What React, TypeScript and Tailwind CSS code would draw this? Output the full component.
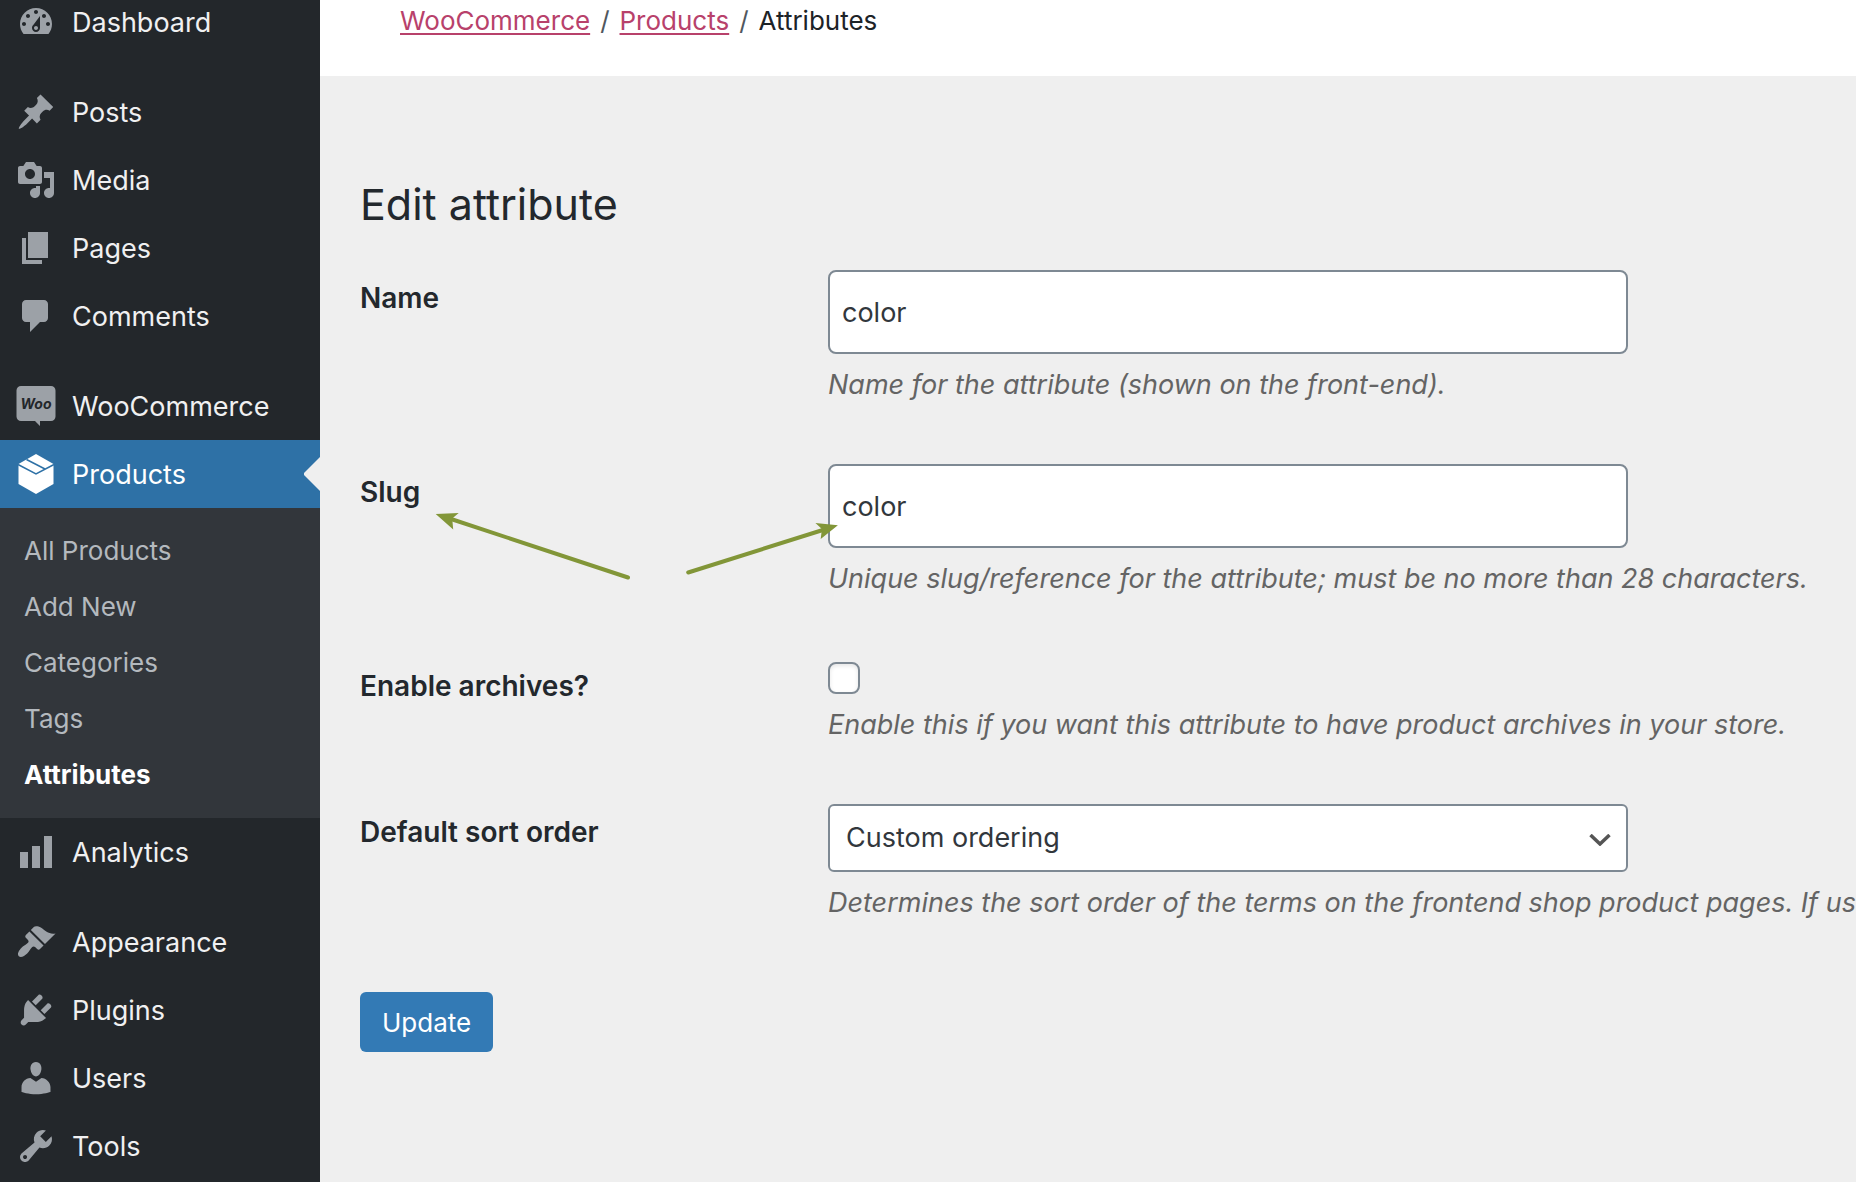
import { useId, type ReactNode } from "react";

const icons = {
  dashboard:
    "M3.76 16h12.48c1.1-1.37 1.76-3.11 1.76-5 0-4.42-3.58-8-8-8s-8 3.58-8 8c0 1.89.66 3.63 1.76 5zM10 4c.55 0 1 .45 1 1s-.45 1-1 1-1-.45-1-1 .45-1 1-1zM6 6c.55 0 1 .45 1 1s-.45 1-1 1-1-.45-1-1 .45-1 1-1zm8 0c.55 0 1 .45 1 1s-.45 1-1 1-1-.45-1-1 .45-1 1-1zm-5.37 5.55L12 7v6c0 1.1-.9 2-2 2s-2-.9-2-2c0-.57.24-1.08.63-1.45zM4 10c.55 0 1 .45 1 1s-.45 1-1 1-1-.45-1-1 .45-1 1-1zm12 0c.55 0 1 .45 1 1s-.45 1-1 1-1-.45-1-1 .45-1 1-1zm-5 3c0-.55-.45-1-1-1s-1 .45-1 1 .45 1 1 1 1-.45 1-1z",
  posts:
    "M10.44 3.02l1.82-1.82 6.36 6.35-1.83 1.82c-1.05-.68-2.48-.57-3.41.36l-.75.75c-.92.93-1.04 2.35-.35 3.41l-1.83 1.82-2.41-2.41-2.8 2.79c-.42.42-3.38 2.71-3.8 2.29s1.86-3.39 2.28-3.81l2.79-2.79L4.1 9.36l1.83-1.82c1.05.69 2.48.57 3.4-.36l.75-.75c.93-.92 1.05-2.35.36-3.41z",
  media:
    "M13 11V4c0-.55-.45-1-1-1h-1.67L9 1H5L3.67 3H2c-.55 0-1 .45-1 1v7c0 .55.45 1 1 1h10c.55 0 1-.45 1-1zM7 4.5c1.38 0 2.5 1.12 2.5 2.5S8.38 9.5 7 9.5 4.5 8.38 4.5 7 5.62 4.5 7 4.5zM14 6h5v10.5c0 1.38-1.12 2.5-2.5 2.5S14 17.88 14 16.5s1.12-2.5 2.5-2.5c.17 0 .34.02.5.05V9h-3V6zm-4 8.05V13h2v3.5c0 1.38-1.12 2.5-2.5 2.5S7 17.88 7 16.5 8.12 14 9.5 14c.17 0 .34.02.5.05z",
  pages: "M6 15V2h10v13H6zm-1 1h8v2H3V5h2v11z",
  comments:
    "M5 2h9c1.1 0 2 .9 2 2v7c0 1.1-.9 2-2 2h-2l-5 5v-5H5c-1.1 0-2-.9-2-2V4c0-1.1.9-2 2-2z",
  analytics: "M18 18V2h-4v16h4zm-6 0V7H8v11h4zm-6 0v-8H2v8h4z",
  appearance:
    "M14.48 11.06L7.41 3.99l1.5-1.5c.5-.56 2.3-.47 3.51.32 1.21.8 1.43 1.28 2.91 2.1 1.18.64 2.45 1.26 4.45.85zm-.71.71L6.7 4.7 4.93 6.47c-.39.39-.39 1.02 0 1.41l1.06 1.06c.39.39.39 1.03 0 1.42-.6.6-1.43 1.11-2.21 1.69-.35.26-.7.53-1.01.84C1.43 14.23.4 16.08 1.4 17.07c.99 1 2.84-.03 4.18-1.36.31-.31.58-.66.85-1.02.57-.78 1.08-1.61 1.69-2.21.39-.39 1.02-.39 1.41 0l1.06 1.06c.39.39 1.02.39 1.41 0z",
  plugins:
    "M13.11 4.36L9.87 7.6 8 5.73l3.24-3.24c.35-.34 1.05-.2 1.56.32.52.51.66 1.21.31 1.55zm-8 1.77l.91-1.12 9.01 9.01-1.19.84c-.71.71-2.63 1.16-3.82 1.16H6.14L4.9 17.26c-.59.59-1.54.59-2.12 0-.59-.58-.59-1.53 0-2.12l1.24-1.24v-3.88c0-1.13.4-3.19 1.09-3.89zm7.26 3.97l3.24-3.24c.34-.35 1.04-.21 1.55.31.52.51.66 1.21.31 1.55l-3.24 3.25z",
  users:
    "M10 9.25c-2.27 0-2.73-3.44-2.73-3.44C7 4.02 7.82 2 9.97 2c2.16 0 2.98 2.02 2.71 3.81 0 0-.41 3.44-2.68 3.44zm0 2.57L12.72 10c2.39 0 4.52 2.33 4.52 4.53v2.49s-3.65 1.13-7.24 1.13c-3.65 0-7.24-1.13-7.24-1.13v-2.49c0-2.25 1.94-4.48 4.47-4.48z",
  tools:
    "M16.68 9.77c-1.34 1.34-3.3 1.67-4.95.99l-5.41 6.52c-.99.99-2.59.99-3.58 0s-.99-2.59 0-3.57l6.52-5.42c-.68-1.65-.35-3.61.99-4.95 1.28-1.28 3.12-1.62 4.72-1.06l-2.89 2.89 2.82 2.82 2.86-2.87c.53 1.58.18 3.39-1.08 4.65zM3.81 16.21c.4.39 1.04.39 1.43 0 .4-.4.4-1.04 0-1.43-.39-.4-1.03-.4-1.43 0-.39.39-.39 1.03 0 1.43z",
};

function Dashicon({ name }: { name: keyof typeof icons }) {
  return (
    <svg viewBox="0 0 20 20" className="size-10 shrink-0" fill="currentColor" aria-hidden="true">
      <path d={icons[name]} />
    </svg>
  );
}

function WooIcon() {
  return (
    <svg viewBox="0 0 40 40" className="size-10 shrink-0" aria-hidden="true">
      <path
        d="M5 0h30a4.500 4.500 0 0 1 4.500 4.500v26A4.500 4.500 0 0 1 35 35H24v5l-5-5H5a4.500 4.500 0 0 1-4.500-4.500v-26A4.500 4.500 0 0 1 5 0z"
        fill="currentColor"
      />
      <text x="20" y="23" textAnchor="middle" fontSize="14" className="fill-[#23272b] font-bold italic">
        Woo
      </text>
    </svg>
  );
}

function BoxIcon() {
  return (
    <svg viewBox="0 0 40 40" className="size-10 shrink-0" aria-hidden="true">
      <path d="M20 0l17.500 10v20L20 40 2.500 30V10z" fill="currentColor" />
      <path d="M2 10.500L20 20 38 10.500M10.500 5.500L29 15" fill="none" className="stroke-[#2e71a6]" strokeWidth="1.500" />
    </svg>
  );
}

function MenuItem({ icon, label, active = false }: { icon: ReactNode; label: string; active?: boolean }) {
  return (
    <a
      href="#"
      aria-current={active ? "true" : undefined}
      className={
        active
          ? "relative flex h-17 items-center gap-4 bg-[#2e71a6] px-4 text-white"
          : "flex h-17 items-center gap-4 px-4 text-[#9ca1a7]"
      }
    >
      {icon}
      <span className={active ? "pt-[2px] text-white" : "pt-[2px] text-[#f0f0f1]"}>{label}</span>
      {active && (
        <svg viewBox="0 0 16 34" className="absolute top-1/2 right-0 h-[34px] w-4 -translate-y-1/2" aria-hidden="true">
          <path d="M16 0L0 16v2l16 16z" fill="#efefef" />
        </svg>
      )}
    </a>
  );
}

const subItems = ["All Products", "Add New", "Categories", "Tags", "Attributes"];

function Sidebar() {
  return (
    <nav aria-label="Admin menu" className="-mt-3 w-80 shrink-0 bg-[#23272b]">
      <MenuItem icon={<Dashicon name="dashboard" />} label="Dashboard" />
      <div className="h-[22px]" />
      <MenuItem icon={<Dashicon name="posts" />} label="Posts" />
      <MenuItem icon={<Dashicon name="media" />} label="Media" />
      <MenuItem icon={<Dashicon name="pages" />} label="Pages" />
      <MenuItem icon={<Dashicon name="comments" />} label="Comments" />
      <div className="h-[22px]" />
      <MenuItem icon={<WooIcon />} label="WooCommerce" />
      <MenuItem icon={<BoxIcon />} label="Products" active />
      <ul className="bg-[#32363b] pt-[14px] pb-4 text-[26px]">
        {subItems.map((item) => (
          <li key={item}>
            <a
              href="#"
              className={
                item === "Attributes"
                  ? "flex h-14 items-center px-6 font-bold text-white"
                  : "flex h-14 items-center px-6 text-[#b4b9be]"
              }
            >
              {item}
            </a>
          </li>
        ))}
      </ul>
      <MenuItem icon={<Dashicon name="analytics" />} label="Analytics" />
      <div className="h-[22px]" />
      <MenuItem icon={<Dashicon name="appearance" />} label="Appearance" />
      <MenuItem icon={<Dashicon name="plugins" />} label="Plugins" />
      <MenuItem icon={<Dashicon name="users" />} label="Users" />
      <MenuItem icon={<Dashicon name="tools" />} label="Tools" />
    </nav>
  );
}

function Breadcrumbs() {
  return (
    <nav
      aria-label="Breadcrumb"
      className="flex gap-[10px] bg-white px-20 pt-[5px] pb-[39px] text-[26px] leading-8 text-[#1d2327]"
    >
      <a href="#" className="text-[#b8416b] underline underline-offset-3">
        WooCommerce
      </a>
      <span className="text-[#50575e]">/</span>
      <a href="#" className="text-[#b8416b] underline underline-offset-3">
        Products
      </a>
      <span className="text-[#50575e]">/</span>
      <span>Attributes</span>
    </nav>
  );
}

function FormRow({
  label,
  help,
  children,
}: {
  label: string;
  help: string;
  children: (id: string) => ReactNode;
}) {
  const id = useId();
  return (
    <div className="flex pt-[30px] pb-7">
      <label htmlFor={id} className="w-[468px] shrink-0 pt-2 text-[28px] leading-10 font-semibold text-[#23282d]">
        {label}
      </label>
      <div className="min-w-0 flex-1">
        {children(id)}
        <p className="mt-[10px] leading-[42px] whitespace-nowrap text-[#646464] italic">{help}</p>
      </div>
    </div>
  );
}

const fieldClass =
  "block h-21 w-[800px] rounded-lg border-2 border-[#7e8993] bg-white px-3 text-[27px] text-[#32373c]";

/* Two callout arrows that point at the slug label and its text box. */
function SlugArrows() {
  return (
    <svg
      viewBox="0 0 410 72"
      className="pointer-events-none absolute top-19 left-[74px] h-[72px] w-[410px]"
      fill="#829638"
      stroke="#829638"
      strokeLinecap="round"
      aria-hidden="true"
    >
      <path d="M14 8L194 67.500" strokeWidth="4" />
      <path d="M1.700 4l23-1-6.500 5.500 1 11z" stroke="none" />
      <path d="M254.200 62.500L392 19" strokeWidth="4" />
      <path d="M403.900 15.300l-22.500-2.300 6.500 6-1.200 10z" stroke="none" />
    </svg>
  );
}

function SlugRow() {
  return (
    <div className="relative">
      <FormRow label="Slug" help="Unique slug/reference for the attribute; must be no more than 28 characters.">
        {(id) => <input id={id} type="text" defaultValue="color" className={fieldClass} />}
      </FormRow>
      <SlugArrows />
    </div>
  );
}

export default function App() {
  return (
    <div className="flex h-screen overflow-hidden bg-[#efefef] font-['Inter',sans-serif] text-[27px]">
      <Sidebar />
      <main className="min-w-0 flex-1">
        <Breadcrumbs />
        <form className="pt-24 pl-10" onSubmit={(e) => e.preventDefault()}>
          <h1 className="pb-1 text-[43px] leading-16 text-[#23282d]">Edit attribute</h1>
          <FormRow label="Name" help="Name for the attribute (shown on the front-end).">
            {(id) => <input id={id} type="text" defaultValue="color" className={fieldClass} />}
          </FormRow>
          <SlugRow />
          <FormRow
            label="Enable archives?"
            help="Enable this if you want this attribute to have product archives in your store."
          >
            {(id) => (
              <div className="pt-1">
                <input
                  id={id}
                  type="checkbox"
                  className="block size-8 appearance-none rounded-lg border-2 border-[#7e8993] bg-white shadow-[inset_0_2px_4px_rgba(0,0,0,0.1)]"
                />
              </div>
            )}
          </FormRow>
          <FormRow
            label="Default sort order"
            help="Determines the sort order of the terms on the frontend shop product pages. If using custom ordering, you can drag and drop the terms in this attribute."
          >
            {(id) => (
              <div className="relative w-[800px]">
                <select
                  id={id}
                  className="block h-17 w-full appearance-none rounded-md border-2 border-[#7e8993] bg-white px-4 text-[27px] text-[#32373c]"
                >
                  <option>Custom ordering</option>
                  <option>Name</option>
                  <option>Name (numeric)</option>
                  <option>Term ID</option>
                </select>
                <svg
                  viewBox="0 0 22 12"
                  className="pointer-events-none absolute top-[30px] right-[17px] h-3 w-[22px]"
                  fill="none"
                  stroke="#555"
                  strokeWidth="3.500"
                  aria-hidden="true"
                >
                  <path d="M1.500 1L11 10l9.500-9" />
                </svg>
              </div>
            )}
          </FormRow>
          <button
            type="submit"
            className="mt-10 h-15 rounded-md bg-[#337ab5] px-[22px] text-[26px] text-white"
          >
            Update
          </button>
        </form>
      </main>
    </div>
  );
}
